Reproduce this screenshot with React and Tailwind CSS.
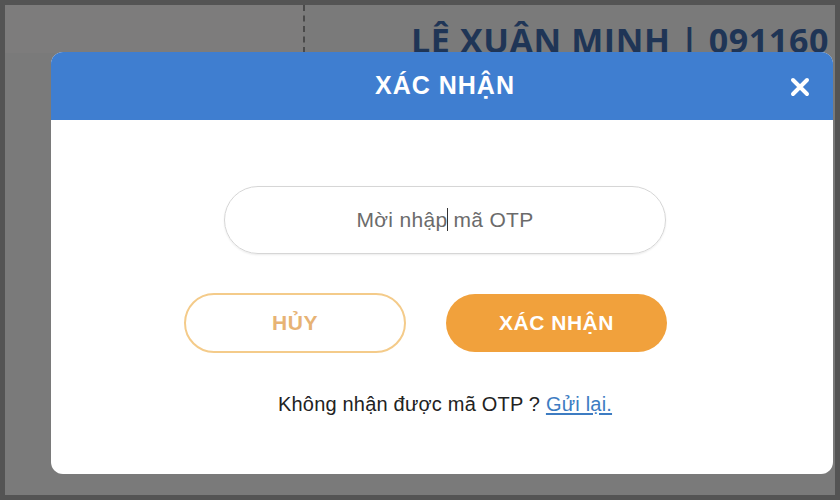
import React from 'react';

const CloseIcon = () => (
  <svg width="22" height="22" viewBox="0 0 22 22" fill="none">
    <path d="M4 4 L18 18 M18 4 L4 18" stroke="white" strokeWidth="4" strokeLinecap="round" />
  </svg>
);

const App = () => {
  return (
    <div
      className="w-[840px] h-[500px] bg-[#545454] pt-[5px] pl-[5px] pr-[5px] pb-[5px]"
      style={{ fontFamily: '"Liberation Sans", Arial, sans-serif' }}
    >
      <div className="relative w-full h-full bg-[#7a7a7a] overflow-hidden">
        {/* page behind the dialog */}
        <div className="flex h-[48px]">
          <div className="w-[298px] bg-[#7d7c7c]" />
          <div className="w-0 border-l-2 border-dashed border-[#4a4a4a]" />
          <div className="flex-1 pl-[106px] pt-[18px]">
            <p
              className="text-[34px] leading-none font-bold tracking-[0.6px] text-[#1f3556] whitespace-nowrap"
              style={{ fontFamily: '"Open Sans", sans-serif' }}
            >
              LÊ XUÂN MINH | 091160
            </p>
          </div>
        </div>

        {/* dialog */}
        <div className="absolute left-[46px] top-[47px] w-[782px] h-[422px] bg-white rounded-[12px] overflow-hidden flex flex-col">
          <div className="relative h-[68px] bg-[#3f7ed0] flex items-center justify-center">
            <h2 className="text-white text-[25px] font-bold tracking-[1px] pl-[6px]">
              XÁC NHẬN
            </h2>
            <button className="absolute right-[22px] top-[24px]">
              <CloseIcon />
            </button>
          </div>

          <div className="flex flex-col items-center pt-[66px] pl-[6px]">
            <div className="w-[442px] h-[68px] rounded-full border border-[#d6d6d6] flex items-center justify-center shadow-[0_1px_2px_rgba(0,0,0,0.08)]">
              <span className="text-[21px] text-[#6b6b6b] tracking-[0.3px]">
                Mời nhậ<span className="border-r border-[#333] -mr-[1px]">p</span> mã OTP
              </span>
            </div>

            <div className="flex gap-[40px] mt-[39px] mr-[39px]">
              <button className="w-[222px] h-[60px] rounded-full border-2 border-[#f4cb8a] text-[#e7b374] text-[21px] font-bold tracking-[0.5px]">
                HỦY
              </button>
              <button className="w-[221px] h-[58px] mt-[1px] rounded-full bg-[#f1a13c] text-white text-[21px] font-bold tracking-[0.5px]">
                XÁC NHẬN
              </button>
            </div>

            <p className="mt-[36px] text-[20px] text-[#222] tracking-[0.2px]">
              Không nhận được mã OTP ?{' '}
              <a className="text-[#3d7cc2] underline underline-offset-2">Gửi lại.</a>
            </p>
          </div>
        </div>
      </div>
    </div>
  );
};

export default App;
